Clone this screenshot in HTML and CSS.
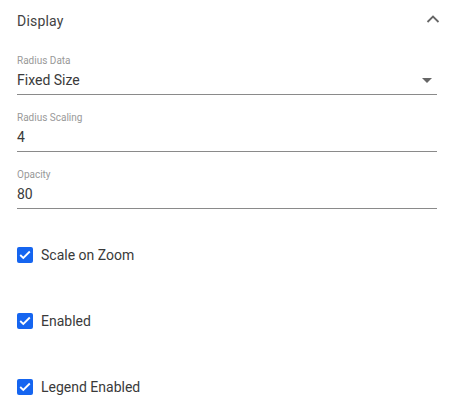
FILE: index.html
```html
<!DOCTYPE html>
<html>
<head>
<meta charset="utf-8">
<link rel="stylesheet" href="styles.css">
</head>
<body>
<div class="panel">
  <div class="header">
    <span class="title">Display</span>
    <svg class="chev" width="14" height="10" viewBox="0 0 14 10"><path d="M1.5 8 L7 2.5 L12.5 8" fill="none" stroke="#666" stroke-width="1.8"/></svg>
  </div>
  <div class="field first">
    <div class="label">Radius Data</div>
    <div class="value select"><span>Fixed Size</span><svg class="caret" width="10" height="5" viewBox="0 0 10 5"><path d="M0 0 L10 0 L5 5 Z" fill="#666"/></svg></div>
  </div>
  <div class="field">
    <div class="label">Radius Scaling</div>
    <div class="value">4</div>
  </div>
  <div class="field">
    <div class="label">Opacity</div>
    <div class="value">80</div>
  </div>
  <div class="checks">
    <label class="check"><span class="box"><svg width="12" height="10" viewBox="0 0 12 10"><path d="M1.2 5 L4.3 8 L10.8 1.5" fill="none" stroke="#fff" stroke-width="1.8"/></svg></span>Scale on Zoom</label>
    <label class="check"><span class="box"><svg width="12" height="10" viewBox="0 0 12 10"><path d="M1.2 5 L4.3 8 L10.8 1.5" fill="none" stroke="#fff" stroke-width="1.8"/></svg></span>Enabled</label>
    <label class="check"><span class="box"><svg width="12" height="10" viewBox="0 0 12 10"><path d="M1.2 5 L4.3 8 L10.8 1.5" fill="none" stroke="#fff" stroke-width="1.8"/></svg></span>Legend Enabled</label>
  </div>
</div>
</body>
</html>
```
FILE: styles.css
```css
html, body {
  margin: 0;
  padding: 0;
  background: #fff;
}
body {
  font-family: Roboto, "Liberation Sans", sans-serif;
  color: #3a3a3a;
}
.panel {
  width: 454px;
  box-sizing: border-box;
  padding: 0 17px;
}
.header {
  height: 40px;
  display: flex;
  align-items: center;
  justify-content: space-between;
}
.title {
  font-size: 14px;
  color: #424242;
  letter-spacing: 0.2px;
  margin-top: 1px;
}
.chev {
  margin-right: -3px;
  margin-top: -3px;
}
.field {
  border-bottom: 1px solid #8a8a8a;
  padding-top: 17px;
}
.field.first {
  padding-top: 15px;
}
.label {
  font-size: 10px;
  color: #999;
  line-height: 12px;
}
.value {
  font-size: 14px;
  color: #3a3a3a;
  line-height: 20px;
  padding-top: 3px;
  padding-bottom: 4px;
}
.select {
  display: flex;
  align-items: center;
  justify-content: space-between;
}
.caret {
  margin-right: 5px;
}
.checks {
  display: flex;
  flex-direction: column;
  gap: 50px;
  padding-top: 38px;
}
.check {
  display: flex;
  align-items: center;
  height: 16px;
  font-size: 14px;
  color: #3a3a3a;
}
.box {
  width: 16px;
  height: 16px;
  border-radius: 2px;
  background: #1565f0;
  display: flex;
  align-items: center;
  justify-content: center;
  margin-right: 8px;
}
```
